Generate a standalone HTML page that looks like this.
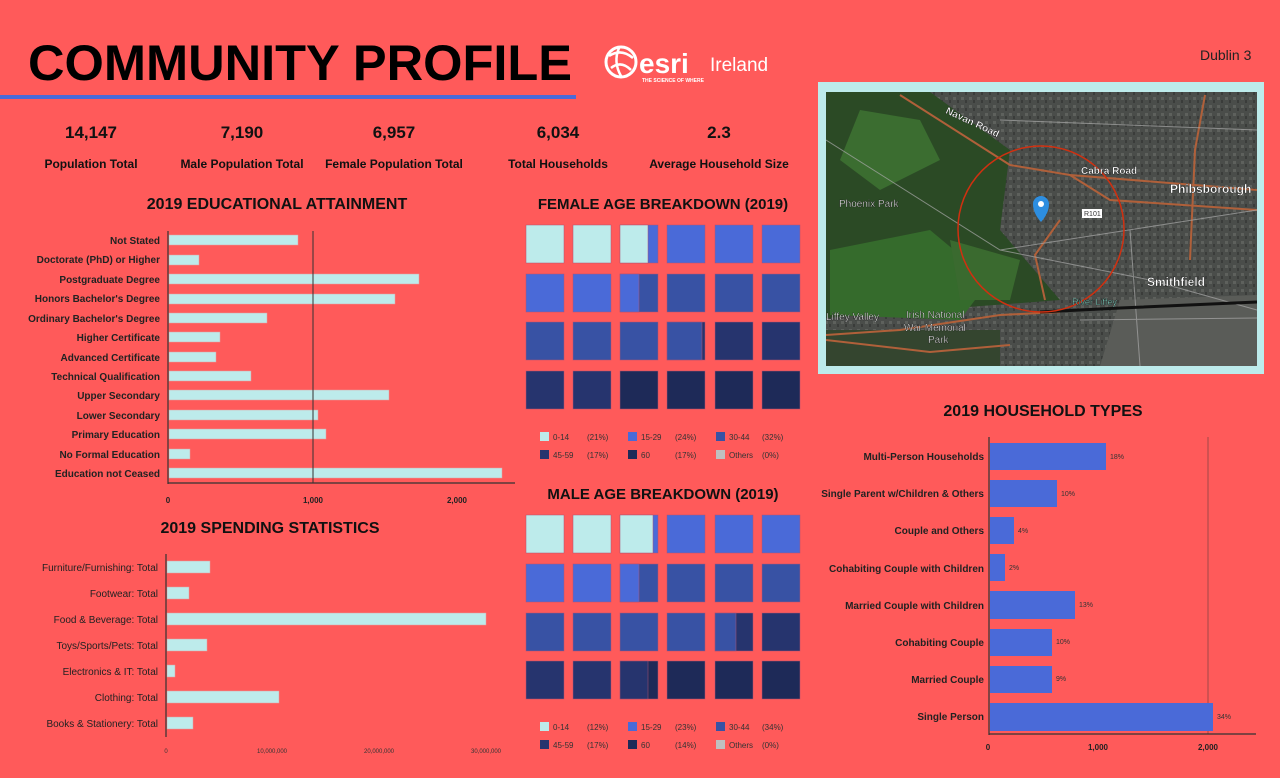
<!DOCTYPE html>
<html><head><meta charset="utf-8"><style>
html,body{margin:0;padding:0;background:#FF5A5A;}
svg{display:block;font-family:"Liberation Sans",sans-serif;}
</style></head><body>
<svg width="1280" height="778" viewBox="0 0 1280 778" xmlns="http://www.w3.org/2000/svg">
<rect width="1280" height="778" fill="#FF5A5A"/>
<text x="28" y="80" font-size="50" font-weight="bold" fill="#000" textLength="544" lengthAdjust="spacingAndGlyphs">COMMUNITY PROFILE</text>
<rect x="0" y="95" width="576" height="4" fill="#4A6AD8"/>
<circle cx="621" cy="62" r="15" fill="none" stroke="#fff" stroke-width="3"/>
<path d="M609 56 Q621 48 633 58 M611 68 Q621 60 631 70 M619 48 Q613 62 621 76" stroke="#fff" stroke-width="2.5" fill="none"/>
<text x="639" y="73" font-size="28" font-weight="bold" fill="#fff">esri</text>
<text x="710" y="71" font-size="19" fill="#fff">Ireland</text>
<text x="642" y="82" font-size="5" font-weight="bold" fill="#fff">THE SCIENCE OF WHERE</text>
<text x="1200" y="60" font-size="14" fill="#222">Dublin 3</text>
<g font-weight="bold" fill="#111" text-anchor="middle">
<text x="91" y="138" font-size="17">14,147</text>
<text x="242" y="138" font-size="17">7,190</text>
<text x="394" y="138" font-size="17">6,957</text>
<text x="558" y="138" font-size="17">6,034</text>
<text x="719" y="138" font-size="17">2.3</text>
<text x="91" y="168" font-size="12">Population Total</text>
<text x="242" y="168" font-size="12">Male Population Total</text>
<text x="394" y="168" font-size="12">Female Population Total</text>
<text x="558" y="168" font-size="12">Total Households</text>
<text x="719" y="168" font-size="12">Average Household Size</text>
<text x="277" y="209" font-size="16">2019 EDUCATIONAL ATTAINMENT</text>
<text x="663" y="209" font-size="15">FEMALE AGE BREAKDOWN (2019)</text>
<text x="270" y="533" font-size="16">2019 SPENDING STATISTICS</text>
<text x="663" y="499" font-size="15">MALE AGE BREAKDOWN (2019)</text>
<text x="1043" y="416" font-size="16">2019 HOUSEHOLD TYPES</text>
</g>
<g fill="#BDEBEB" stroke="#e0a0a0" stroke-width="0.5">
<rect x="169" y="235" width="129" height="10"/>
<rect x="169" y="255" width="30" height="10"/>
<rect x="169" y="274" width="250" height="10"/>
<rect x="169" y="294" width="226" height="10"/>
<rect x="169" y="313" width="98" height="10"/>
<rect x="169" y="332" width="51" height="10"/>
<rect x="169" y="352" width="47" height="10"/>
<rect x="169" y="371" width="82" height="10"/>
<rect x="169" y="390" width="220" height="10"/>
<rect x="169" y="410" width="149" height="10"/>
<rect x="169" y="429" width="157" height="10"/>
<rect x="169" y="449" width="21" height="10"/>
<rect x="169" y="468" width="333" height="10"/>
</g>
<line x1="313" y1="231" x2="313" y2="483" stroke="#333" stroke-width="1"/>
<line x1="168" y1="231" x2="168" y2="484" stroke="#333" stroke-width="1.2"/>
<line x1="168" y1="483" x2="515" y2="483" stroke="#333" stroke-width="1.2"/>
<g font-size="10" font-weight="bold" fill="#222" text-anchor="end">
<text x="160" y="244">Not Stated</text>
<text x="160" y="263">Doctorate (PhD) or Higher</text>
<text x="160" y="283">Postgraduate Degree</text>
<text x="160" y="302">Honors Bachelor's Degree</text>
<text x="160" y="322">Ordinary Bachelor's Degree</text>
<text x="160" y="341">Higher Certificate</text>
<text x="160" y="361">Advanced Certificate</text>
<text x="160" y="380">Technical Qualification</text>
<text x="160" y="399">Upper Secondary</text>
<text x="160" y="419">Lower Secondary</text>
<text x="160" y="438">Primary Education</text>
<text x="160" y="458">No Formal Education</text>
<text x="160" y="477">Education not Ceased</text>
</g>
<g font-size="8" font-weight="bold" fill="#222" text-anchor="middle">
<text x="168" y="503">0</text><text x="313" y="503">1,000</text><text x="457" y="503">2,000</text>
</g>
<g fill="#BDEBEB" stroke="#e0a0a0" stroke-width="0.5">
<rect x="167" y="561" width="43" height="12"/>
<rect x="167" y="587" width="22" height="12"/>
<rect x="167" y="613" width="319" height="12"/>
<rect x="167" y="639" width="40" height="12"/>
<rect x="167" y="665" width="8" height="12"/>
<rect x="167" y="691" width="112" height="12"/>
<rect x="167" y="717" width="26" height="12"/>
</g>
<line x1="166" y1="554" x2="166" y2="737" stroke="#333" stroke-width="1.2"/>
<g font-size="10" fill="#222" text-anchor="end">
<text x="158" y="571">Furniture/Furnishing: Total</text>
<text x="158" y="597">Footwear: Total</text>
<text x="158" y="623">Food &amp; Beverage: Total</text>
<text x="158" y="649">Toys/Sports/Pets: Total</text>
<text x="158" y="675">Electronics &amp; IT: Total</text>
<text x="158" y="701">Clothing: Total</text>
<text x="158" y="727">Books &amp; Stationery: Total</text>
</g>
<g font-size="6" fill="#333" text-anchor="middle">
<text x="166" y="753">0</text><text x="272" y="753">10,000,000</text><text x="379" y="753">20,000,000</text><text x="486" y="753">30,000,000</text>
</g>
<g stroke="#b05070" stroke-width="0.5">
<g transform="translate(0,225)">
<rect x="526" width="38" height="38" fill="#BDEBEB"/><rect x="573" width="38" height="38" fill="#BDEBEB"/>
<rect x="620" width="38" height="38" fill="#4A6AD8"/><rect x="620" width="28" height="38" fill="#BDEBEB"/>
<rect x="667" width="38" height="38" fill="#4A6AD8"/><rect x="715" width="38" height="38" fill="#4A6AD8"/><rect x="762" width="38" height="38" fill="#4A6AD8"/>
</g>
<g transform="translate(0,274)">
<rect x="526" width="38" height="38" fill="#4A6AD8"/><rect x="573" width="38" height="38" fill="#4A6AD8"/>
<rect x="620" width="38" height="38" fill="#3852A4"/><rect x="620" width="19" height="38" fill="#4A6AD8"/>
<rect x="667" width="38" height="38" fill="#3852A4"/><rect x="715" width="38" height="38" fill="#3852A4"/><rect x="762" width="38" height="38" fill="#3852A4"/>
</g>
<g transform="translate(0,322)">
<rect x="526" width="38" height="38" fill="#3852A4"/><rect x="573" width="38" height="38" fill="#3852A4"/>
<rect x="620" width="38" height="38" fill="#3852A4"/>
<rect x="667" width="38" height="38" fill="#26346E"/><rect x="667" width="35" height="38" fill="#3852A4"/>
<rect x="715" width="38" height="38" fill="#26346E"/><rect x="762" width="38" height="38" fill="#26346E"/>
</g>
<g transform="translate(0,371)">
<rect x="526" width="38" height="38" fill="#26346E"/><rect x="573" width="38" height="38" fill="#26346E"/>
<rect x="620" width="38" height="38" fill="#1E2A58"/><rect x="667" width="38" height="38" fill="#1E2A58"/>
<rect x="715" width="38" height="38" fill="#1E2A58"/><rect x="762" width="38" height="38" fill="#1E2A58"/>
</g>
<g transform="translate(0,515)">
<rect x="526" width="38" height="38" fill="#BDEBEB"/><rect x="573" width="38" height="38" fill="#BDEBEB"/>
<rect x="620" width="38" height="38" fill="#4A6AD8"/><rect x="620" width="33" height="38" fill="#BDEBEB"/>
<rect x="667" width="38" height="38" fill="#4A6AD8"/><rect x="715" width="38" height="38" fill="#4A6AD8"/><rect x="762" width="38" height="38" fill="#4A6AD8"/>
</g>
<g transform="translate(0,564)">
<rect x="526" width="38" height="38" fill="#4A6AD8"/><rect x="573" width="38" height="38" fill="#4A6AD8"/>
<rect x="620" width="38" height="38" fill="#3852A4"/><rect x="620" width="19" height="38" fill="#4A6AD8"/>
<rect x="667" width="38" height="38" fill="#3852A4"/><rect x="715" width="38" height="38" fill="#3852A4"/><rect x="762" width="38" height="38" fill="#3852A4"/>
</g>
<g transform="translate(0,613)">
<rect x="526" width="38" height="38" fill="#3852A4"/><rect x="573" width="38" height="38" fill="#3852A4"/>
<rect x="620" width="38" height="38" fill="#3852A4"/><rect x="667" width="38" height="38" fill="#3852A4"/>
<rect x="715" width="38" height="38" fill="#26346E"/><rect x="715" width="21" height="38" fill="#3852A4"/>
<rect x="762" width="38" height="38" fill="#26346E"/>
</g>
<g transform="translate(0,661)">
<rect x="526" width="38" height="38" fill="#26346E"/><rect x="573" width="38" height="38" fill="#26346E"/>
<rect x="620" width="38" height="38" fill="#1E2A58"/><rect x="620" width="28" height="38" fill="#26346E"/>
<rect x="667" width="38" height="38" fill="#1E2A58"/><rect x="715" width="38" height="38" fill="#1E2A58"/><rect x="762" width="38" height="38" fill="#1E2A58"/>
</g>
</g>
<g font-size="8" fill="#333">
<g transform="translate(0,432)">
<rect x="540" y="0" width="9" height="9" fill="#BDEBEB"/><text x="553" y="8">0-14</text><text x="587" y="8">(21%)</text>
<rect x="628" y="0" width="9" height="9" fill="#4A6AD8"/><text x="641" y="8">15-29</text><text x="675" y="8">(24%)</text>
<rect x="716" y="0" width="9" height="9" fill="#3852A4"/><text x="729" y="8">30-44</text><text x="762" y="8">(32%)</text>
<rect x="540" y="18" width="9" height="9" fill="#26346E"/><text x="553" y="26">45-59</text><text x="587" y="26">(17%)</text>
<rect x="628" y="18" width="9" height="9" fill="#1E2A58"/><text x="641" y="26">60</text><text x="675" y="26">(17%)</text>
<rect x="716" y="18" width="9" height="9" fill="#C0C0C0"/><text x="729" y="26">Others</text><text x="762" y="26">(0%)</text>
</g>
<g transform="translate(0,722)">
<rect x="540" y="0" width="9" height="9" fill="#BDEBEB"/><text x="553" y="8">0-14</text><text x="587" y="8">(12%)</text>
<rect x="628" y="0" width="9" height="9" fill="#4A6AD8"/><text x="641" y="8">15-29</text><text x="675" y="8">(23%)</text>
<rect x="716" y="0" width="9" height="9" fill="#3852A4"/><text x="729" y="8">30-44</text><text x="762" y="8">(34%)</text>
<rect x="540" y="18" width="9" height="9" fill="#26346E"/><text x="553" y="26">45-59</text><text x="587" y="26">(17%)</text>
<rect x="628" y="18" width="9" height="9" fill="#1E2A58"/><text x="641" y="26">60</text><text x="675" y="26">(14%)</text>
<rect x="716" y="18" width="9" height="9" fill="#C0C0C0"/><text x="729" y="26">Others</text><text x="762" y="26">(0%)</text>
</g>
</g>
<!-- Map -->
<defs>
<pattern id="city" width="8" height="8" patternUnits="userSpaceOnUse">
<rect width="8" height="8" fill="#4a4d4a"/><rect x="1" y="1" width="3" height="3" fill="#5e615d"/><rect x="5" y="4" width="2" height="3" fill="#3a3c3a"/>
</pattern>
<clipPath id="mc"><rect x="826" y="92" width="431" height="274"/></clipPath>
</defs>
<rect x="818" y="82" width="446" height="292" fill="#BDEBEB"/>
<g clip-path="url(#mc)">
<rect x="826" y="92" width="431" height="274" fill="url(#city)"/>
<path d="M826 92 L930 92 L1010 150 L1000 230 L1060 300 L826 318 Z" fill="#2b4a25"/>
<path d="M830 250 L930 230 L990 280 L960 320 L830 315 Z" fill="#356b2c"/>
<path d="M860 110 L920 120 L940 160 L880 190 L840 160 Z" fill="#3b6d30"/>
<path d="M950 240 L1020 260 L1010 300 L960 300 Z" fill="#3a6a2f"/>
<path d="M826 330 L1000 330 L1000 366 L826 366 Z" fill="#34452f"/>
<path d="M1120 300 L1257 295 L1257 366 L1100 366 Z" fill="#5a5c58"/>
<g stroke="#b0603a" stroke-width="2" fill="none">
<path d="M900 95 L1010 165 L1070 175 L1257 190"/>
<path d="M1070 175 L1110 200 L1257 210"/>
<path d="M826 335 L900 330 L1000 315 L1060 312"/>
<path d="M1205 95 L1195 150 L1190 260"/>
<path d="M1060 220 L1035 255 L1045 300"/>
<path d="M826 340 L930 352 L1010 345"/>
</g>
<g stroke="#aaa" stroke-width="1" fill="none" opacity="0.7">
<path d="M826 140 L1000 250 L1150 280"/><path d="M1000 250 L1257 210"/><path d="M1150 280 L1257 310"/>
<path d="M1080 320 L1257 318"/><path d="M1130 230 L1140 366"/><path d="M1000 120 L1257 130"/>
</g>
<path d="M1040 312 L1120 308 L1257 302" stroke="#111" stroke-width="3" fill="none"/>
</g>
<circle cx="1041" cy="229" r="83" fill="none" stroke="#d03010" stroke-width="1.5"/>
<path d="M1041 196 a8 8 0 0 1 8 8 q0 9 -8 18 q-8 -9 -8 -18 a8 8 0 0 1 8 -8 z" fill="#2d8ee0"/>
<circle cx="1041" cy="204" r="3" fill="#fff"/>
<rect x="1082" y="209" width="20" height="9" fill="#fff"/>
<text x="1084" y="216" font-size="7" fill="#333">R101</text>
<g font-size="10" fill="#fff" stroke="#000" stroke-width="0.3" font-weight="bold">
<text x="945" y="113" transform="rotate(25 945 113)">Navan Road</text>
<text x="1081" y="174">Cabra Road</text>
<text x="1170" y="193" font-size="12">Phibsborough</text>
<text x="839" y="207" font-weight="normal">Phoenix Park</text>
<text x="1147" y="286" font-size="12">Smithfield</text>
<text x="826" y="320" font-weight="normal">Liffey Valley</text>
<text x="906" y="318" font-weight="normal">Irish National</text>
<text x="904" y="331" font-weight="normal">War Memorial</text>
<text x="928" y="343" font-weight="normal">Park</text>
<text x="1072" y="305" fill="#9ed" font-weight="normal" font-size="9">River Liffey</text>
</g>
<line x1="1208" y1="437" x2="1208" y2="734" stroke="#a04848" stroke-width="1"/>
<g fill="#4A6AD8">
<rect x="990" y="443" width="116" height="27"/>
<rect x="990" y="480" width="67" height="27"/>
<rect x="990" y="517" width="24" height="27"/>
<rect x="990" y="554" width="15" height="27"/>
<rect x="990" y="591" width="85" height="28"/>
<rect x="990" y="629" width="62" height="27"/>
<rect x="990" y="666" width="62" height="27"/>
<rect x="990" y="703" width="223" height="28"/>
</g>
<line x1="989" y1="437" x2="989" y2="735" stroke="#333" stroke-width="1.2"/>
<line x1="989" y1="734" x2="1256" y2="734" stroke="#333" stroke-width="1.2"/>
<g font-size="10" font-weight="bold" fill="#222" text-anchor="end">
<text x="984" y="460">Multi-Person Households</text>
<text x="984" y="497">Single Parent w/Children &amp; Others</text>
<text x="984" y="534">Couple and Others</text>
<text x="984" y="572">Cohabiting Couple with Children</text>
<text x="984" y="609">Married Couple with Children</text>
<text x="984" y="646">Cohabiting Couple</text>
<text x="984" y="683">Married Couple</text>
<text x="984" y="720">Single Person</text>
</g>
<g font-size="7" fill="#333">
<text x="1110" y="459">18%</text><text x="1061" y="496">10%</text><text x="1018" y="533">4%</text><text x="1009" y="570">2%</text>
<text x="1079" y="607">13%</text><text x="1056" y="644">10%</text><text x="1056" y="681">9%</text><text x="1217" y="719">34%</text>
</g>
<g font-size="8" font-weight="bold" fill="#222" text-anchor="middle">
<text x="988" y="750">0</text><text x="1098" y="750">1,000</text><text x="1208" y="750">2,000</text>
</g>
</svg>
</body></html>
